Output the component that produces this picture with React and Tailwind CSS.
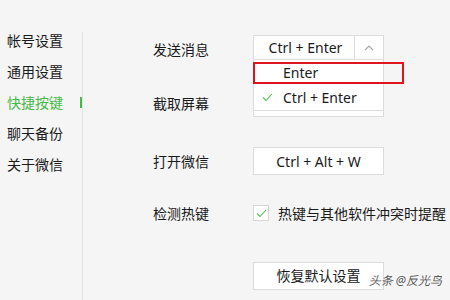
const FONT = "font-['Noto_Sans','Noto_Sans_CJK_SC',sans-serif]";

const MENU = ["帐号设置", "通用设置", "快捷按键", "聊天备份", "关于微信"];
const ACTIVE = "快捷按键";

const boxClass =
  "flex h-[28px] w-[131px] items-center justify-center border border-[#dcdcdc] bg-white text-[14px] text-[#1a1a1a]";

function Row({ label, className = "", labelClass = "", children }) {
  return (
    <div className={`flex ${className}`}>
      <div className={`w-[100px] shrink-0 text-[14px] text-[#1a1a1a] ${labelClass}`}>{label}</div>
      {children}
    </div>
  );
}

function Check({ className = "" }) {
  return (
    <svg width="11" height="9" viewBox="0 0 11 9" fill="none" className={className} aria-hidden>
      <path d="M1 4.5l3 3L10 1" stroke="#5cb85c" strokeWidth="1.1" />
    </svg>
  );
}

export default function App() {
  return (
    <div className={`flex h-[300px] w-[450px] overflow-hidden bg-[#f5f5f5] ${FONT}`}>
      <aside className="flex w-[82px] shrink-0 flex-col pt-[25px]">
        {MENU.map((item) => {
          const active = item === ACTIVE;
          return (
            <div key={item} className="flex h-[31px] items-center justify-between pl-[7px]">
              <span className={`text-[14px] ${active ? "text-[#46b946]" : "text-[#1a1a1a]"}`}>
                {item}
              </span>
              {active && <span className="h-[11px] w-[2px] bg-[#46b946]" />}
            </div>
          );
        })}
      </aside>

      <div className="mt-[32px] w-px shrink-0 bg-[#e3e3e3]" />

      <main className="relative flex-1 pl-[70px] pt-[35px]">
        <Row label="发送消息" className="relative z-10 h-[24px] items-start" labelClass="pt-[4px]">
          <div className="relative">
            <div className="flex h-[25px] w-[131px] border border-[#dcdcdc] bg-white text-[14px] text-[#1a1a1a]">
              <div className="flex flex-1 items-center justify-center pl-[3px]">Ctrl + Enter</div>
              <div className="flex w-[29px] items-center justify-center border-l border-[#dcdcdc]">
                <svg width="10" height="6" viewBox="0 0 10 6" fill="none" aria-hidden>
                  <path d="M1 5l4-4 4 4" stroke="#a8a8a8" strokeWidth="1.1" />
                </svg>
              </div>
            </div>
            <div className="absolute left-0 top-[24px] w-[131px] border border-[#dcdcdc] bg-white text-[14px] text-[#1a1a1a]">
              <div className="flex h-[25px] items-center pl-[29px]">Enter</div>
              <div className="flex h-[25px] items-center pl-[8px]">
                <Check className="mr-[10px]" />
                Ctrl + Enter
              </div>
            </div>
            <div className="absolute left-0 top-[27px] h-[22px] w-[151px] border-2 border-[#e0141e]" />
          </div>
        </Row>

        <Row label="截取屏幕" className="mt-[30px] h-[28px] items-center">
          <div className={boxClass} />
        </Row>

        <Row label="打开微信" className="mt-[30px] h-[28px] items-center">
          <div className={boxClass}>Ctrl + Alt + W</div>
        </Row>

        <Row label="检测热键" className="mt-[24px] h-[28px] items-center">
          <div className="flex h-[16px] w-[16px] items-center justify-center border border-[#d6d6d6] bg-white">
            <Check />
          </div>
          <span className="ml-[9px] whitespace-nowrap text-[14px] text-[#1a1a1a]">
            热键与其他软件冲突时提醒
          </span>
        </Row>

        <Row label="" className="mt-[36px] h-[25px] items-center">
          <div className={`${boxClass} h-[25px]`}>恢复默认设置</div>
        </Row>

        <div className="absolute bottom-[10px] right-[8px] text-[12px] italic text-[#5a5a5a] [text-shadow:0_0_2px_#fff]">
          头条 @反光鸟
        </div>
      </main>
    </div>
  );
}
